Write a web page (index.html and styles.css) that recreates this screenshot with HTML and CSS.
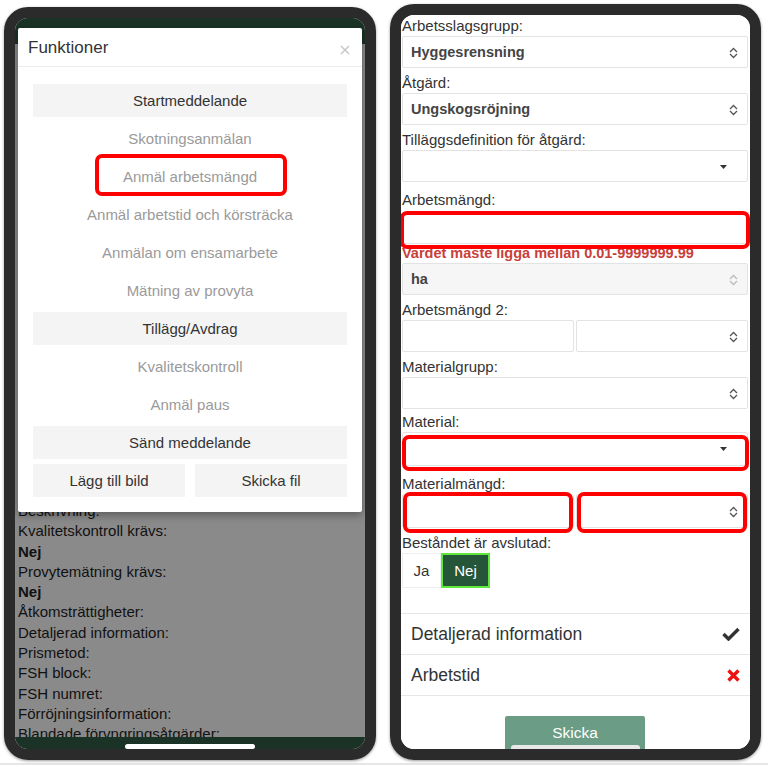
FILE: index.html
```html
<!DOCTYPE html>
<html>
<head>
    <title>Funktioner</title>
    <link rel="stylesheet" href="styles.css">
</head>
<body>
    <div class="stage">
        <!-- left phone: menu dialog over the order details -->
        <div class="phone phone-left">
            <div class="screen screen-dim">
                <div class="app-bar"></div>
                <div class="details">
                    <p>Beskrivning:</p>
                    <p>Kvalitetskontroll krävs:</p>
                    <p class="strong">Nej</p>
                    <p>Provytemätning krävs:</p>
                    <p class="strong">Nej</p>
                    <p>Åtkomsträttigheter:</p>
                    <p>Detaljerad information:</p>
                    <p>Prismetod:</p>
                    <p>FSH block:</p>
                    <p>FSH numret:</p>
                    <p>Förröjningsinformation:</p>
                    <p>Blandade förvngringsåtgärder:</p>
                </div>
                <div class="home-bar"><span class="home-indicator"></span></div>

                <div class="modal">
                    <div class="modal-head">
                        <span class="modal-title">Funktioner</span>
                        <svg class="modal-close" width="10" height="10" viewBox="0 0 10 10">
                            <path d="M1 1 L9 9 M9 1 L1 9" stroke="#c9c9c9" stroke-width="1.6" fill="none"/>
                        </svg>
                    </div>
                    <div class="modal-body">
                        <div class="menu-item">Startmeddelande</div>
                        <div class="menu-item off">Skotningsanmälan</div>
                        <div class="menu-item off">Anmäl arbetsmängd<span class="mark mark-menu"></span></div>
                        <div class="menu-item off">Anmäl arbetstid och körsträcka</div>
                        <div class="menu-item off">Anmälan om ensamarbete</div>
                        <div class="menu-item off">Mätning av provyta</div>
                        <div class="menu-item">Tillägg/Avdrag</div>
                        <div class="menu-item off">Kvalitetskontroll</div>
                        <div class="menu-item off">Anmäl paus</div>
                        <div class="menu-item">Sänd meddelande</div>
                        <div class="menu-row">
                            <div class="menu-item">Lägg till bild</div>
                            <div class="menu-item">Skicka fil</div>
                        </div>
                    </div>
                </div>
            </div>
        </div>

        <!-- right phone: report form -->
        <div class="phone phone-right">
            <div class="screen form">
                <div class="label">Arbetsslagsgrupp:</div>
                <div class="control">Hyggesrensning
                    <svg class="updown" width="9" height="12" viewBox="0 0 9 12"><path d="M1 5 L4.5 1.5 L8 5 M1 7 L4.5 10.5 L8 7" stroke="#555" stroke-width="1.3" fill="none"/></svg>
                </div>
                <div class="label">Åtgärd:</div>
                <div class="control">Ungskogsröjning
                    <svg class="updown" width="9" height="12" viewBox="0 0 9 12"><path d="M1 5 L4.5 1.5 L8 5 M1 7 L4.5 10.5 L8 7" stroke="#555" stroke-width="1.3" fill="none"/></svg>
                </div>
                <div class="label">Tilläggsdefinition för åtgärd:</div>
                <div class="control space-8">
                    <svg class="caret" width="7" height="4" viewBox="0 0 7 4"><path d="M0 0 H7 L3.5 4 Z" fill="#333"/></svg>
                </div>
                <div class="label">Arbetsmängd:</div>
                <div class="control input">
                    <span class="mark mark-amount"></span>
                </div>
                <div class="error">Vardet måste ligga mellan 0.01-9999999.99</div>
                <div class="control disabled">ha
                    <svg class="updown" width="9" height="12" viewBox="0 0 9 12"><path d="M1 5 L4.5 1.5 L8 5 M1 7 L4.5 10.5 L8 7" stroke="#bbb" stroke-width="1.3" fill="none"/></svg>
                </div>
                <div class="label">Arbetsmängd 2:</div>
                <div class="pair">
                    <div class="control"></div>
                    <div class="control">
                        <svg class="updown" width="9" height="12" viewBox="0 0 9 12"><path d="M1 5 L4.5 1.5 L8 5 M1 7 L4.5 10.5 L8 7" stroke="#555" stroke-width="1.3" fill="none"/></svg>
                    </div>
                </div>
                <div class="label">Materialgrupp:</div>
                <div class="control space-3">
                    <svg class="updown" width="9" height="12" viewBox="0 0 9 12"><path d="M1 5 L4.5 1.5 L8 5 M1 7 L4.5 10.5 L8 7" stroke="#555" stroke-width="1.3" fill="none"/></svg>
                </div>
                <div class="label">Material:</div>
                <div class="control tall space-8">
                    <svg class="caret" width="7" height="4" viewBox="0 0 7 4"><path d="M0 0 H7 L3.5 4 Z" fill="#333"/></svg>
                    <span class="mark mark-material"></span>
                </div>
                <div class="label">Materialmängd:</div>
                <div class="pair space-4">
                    <div class="control tall"><span class="mark mark-pair"></span></div>
                    <div class="control tall">
                        <svg class="updown" width="9" height="12" viewBox="0 0 9 12"><path d="M1 5 L4.5 1.5 L8 5 M1 7 L4.5 10.5 L8 7" stroke="#555" stroke-width="1.3" fill="none"/></svg>
                        <span class="mark mark-pair"></span>
                    </div>
                </div>
                <div class="label">Beståndet är avslutad:</div>
                <div class="toggle">
                    <span class="toggle-opt">Ja</span>
                    <span class="toggle-opt active">Nej</span>
                </div>

                <div class="status-list">
                    <div class="status-row">
                        <span>Detaljerad information</span>
                        <svg width="18" height="14" viewBox="0 0 18 14"><path d="M1.5 7 L6.5 12 L16.5 2" stroke="#333" stroke-width="3.4" fill="none"/></svg>
                    </div>
                    <div class="status-row">
                        <span>Arbetstid</span>
                        <svg width="13" height="13" viewBox="0 0 13 13"><path d="M1.5 1.5 L11.5 11.5 M11.5 1.5 L1.5 11.5" stroke="#ee1111" stroke-width="3.4" fill="none"/></svg>
                    </div>
                </div>
                <button class="send">Skicka<span class="send-shade"></span></button>
            </div>
        </div>
    </div>
    <div class="page-rule"></div>
</body>
</html>
```

FILE: styles.css
```css
body {
    margin: 0;
    background-color: #FFFFFF;
    font-family: "Liberation Sans", Arial, sans-serif;
}
.stage {
    display: flex;
    align-items: flex-end;
    gap: 14px;
    padding: 4px 0 0 4px;
}
.page-rule {
    height: 2px;
    margin-top: 3px;
    background-color: #e6e6e6;
}

/* phone frames */
.phone {
    box-sizing: border-box;
    border: 11px solid #2b2b2b;
    border-radius: 24px;
    overflow: hidden;
    box-shadow: 0 1px 3px rgba(0, 0, 0, 0.4);
}
.phone-left {
    width: 372px;
    height: 753px;
}
.phone-right {
    width: 371px;
    height: 756px;
}
.screen {
    position: relative;
    box-sizing: border-box;
    height: 100%;
    overflow: hidden;
}

/* left screen */
.screen-dim {
    display: flex;
    flex-direction: column;
    background-color: #8a8a8a;
}
.app-bar {
    height: 26px;
    background-color: #1a3326; /* Dark green */
}
.details {
    flex: 1;
    overflow: hidden;
    padding: 457px 0 0 3px;
    font-size: 15px;
    line-height: 20.3px;
    color: #111;
}
.details p {
    margin: 0;
}
.details .strong {
    font-weight: bold;
}
.home-bar {
    height: 12px;
    display: flex;
    justify-content: center;
    align-items: flex-end;
    background-color: #1a3326;
}
.home-indicator {
    width: 130px;
    height: 5px;
    border-radius: 3px;
    background-color: #FFFFFF;
}

.modal {
    position: absolute;
    top: 10px;
    left: 3px;
    width: 344px;
    background-color: #FFFFFF;
    border-radius: 2px;
    box-shadow: 0 3px 8px rgba(0, 0, 0, 0.35);
}
.modal-head {
    height: 37px;
    display: flex;
    align-items: center;
    justify-content: space-between;
    padding: 1px 12px 0 10px;
    border-bottom: 1px solid #ececec;
}
.modal-title {
    font-size: 17px;
    color: #333;
}
.modal-close {
    margin-top: 4px;
}
.modal-body {
    padding: 17px 15px 15px;
}
.menu-item {
    position: relative;
    height: 33px;
    line-height: 33px;
    margin-bottom: 5px;
    text-align: center;
    font-size: 15px;
    color: #333;
    background-color: #f4f4f4;
}
.menu-item.off {
    color: #9a9a9a;
    background-color: transparent;
}
.menu-row {
    display: grid;
    grid-template-columns: 1fr 1fr;
    gap: 10px;
}
.menu-row .menu-item {
    margin-bottom: 0;
}

/* red annotation frames */
.mark {
    position: absolute;
    border: 4px solid #f00;
    border-radius: 7px;
    pointer-events: none;
}
.mark-menu {
    top: -6px;
    bottom: -3px;
    left: 62px;
    right: 60px;
}
.mark-amount {
    top: -2px;
    bottom: -6px;
    left: -3px;
    right: -3px;
}
.mark-material {
    top: 2px;
    bottom: -6px;
    left: -1px;
    right: -2px;
}
.mark-pair {
    top: -3px;
    bottom: -6px;
    left: 0;
    right: 0;
}

/* right screen form */
.form {
    padding: 1px 2px 0 1px;
    background-color: #FFFFFF;
}
.label {
    font-size: 15px;
    line-height: 20px;
    color: #333;
}
.control {
    position: relative;
    box-sizing: border-box;
    height: 32px;
    margin-bottom: 5px;
    padding: 0 8px;
    display: flex;
    align-items: center;
    border: 1px solid #e3e3e3;
    border-radius: 2px;
    font-size: 14.5px;
    font-weight: bold;
    color: #444;
}
.control.tall {
    height: 34px;
}
.control.input {
    height: 32px;
    margin: 2px 0 0;
}
.control.disabled {
    background-color: #f6f6f6;
}
.space-8 {
    margin-bottom: 8px;
}
.space-3 {
    margin-bottom: 3px;
}
.space-4 {
    margin-bottom: 4px;
}
.updown {
    position: absolute;
    right: 9px;
    top: 10px;
}
.control.tall .updown {
    top: 11px;
}
.caret {
    position: absolute;
    right: 20px;
    top: 14px;
}
.error {
    font-size: 14.5px;
    font-weight: bold;
    line-height: 19px;
    color: #c8403a;
}
.pair {
    display: flex;
    gap: 2px;
    margin-bottom: 5px;
}
.pair .control {
    flex: 1;
    margin: 0;
}
.toggle {
    display: flex;
    height: 35px;
}
.toggle-opt {
    box-sizing: border-box;
    width: 39px;
    line-height: 33px;
    text-align: center;
    font-size: 15px;
    color: #333;
    border: 1px solid #eee;
}
.toggle-opt.active {
    width: 49px;
    color: #FFFFFF;
    background-color: #265639;
    border: 2px solid #5ee83b;
    line-height: 31px;
}
.status-list {
    margin: 25px -2px 0 -1px;
    border-bottom: 1px solid #e6e6e6;
}
.status-row {
    height: 40px;
    display: flex;
    align-items: center;
    justify-content: space-between;
    padding: 0 10px;
    border-top: 1px solid #e6e6e6;
    font-size: 17.5px;
    color: #333;
}
.send {
    position: relative;
    display: block;
    width: 140px;
    height: 40px;
    margin: 20px auto 0;
    padding: 0 0 6px;
    border: none;
    border-radius: 2px;
    background-color: #6b9c86;
    color: #FFFFFF;
    font-family: "Liberation Sans", Arial, sans-serif;
    font-size: 15.5px;
}
.send-shade {
    position: absolute;
    left: 6px;
    right: 5px;
    top: 29px;
    height: 10px;
    border-radius: 3px;
    background-color: #e8e8e8;
}
```
